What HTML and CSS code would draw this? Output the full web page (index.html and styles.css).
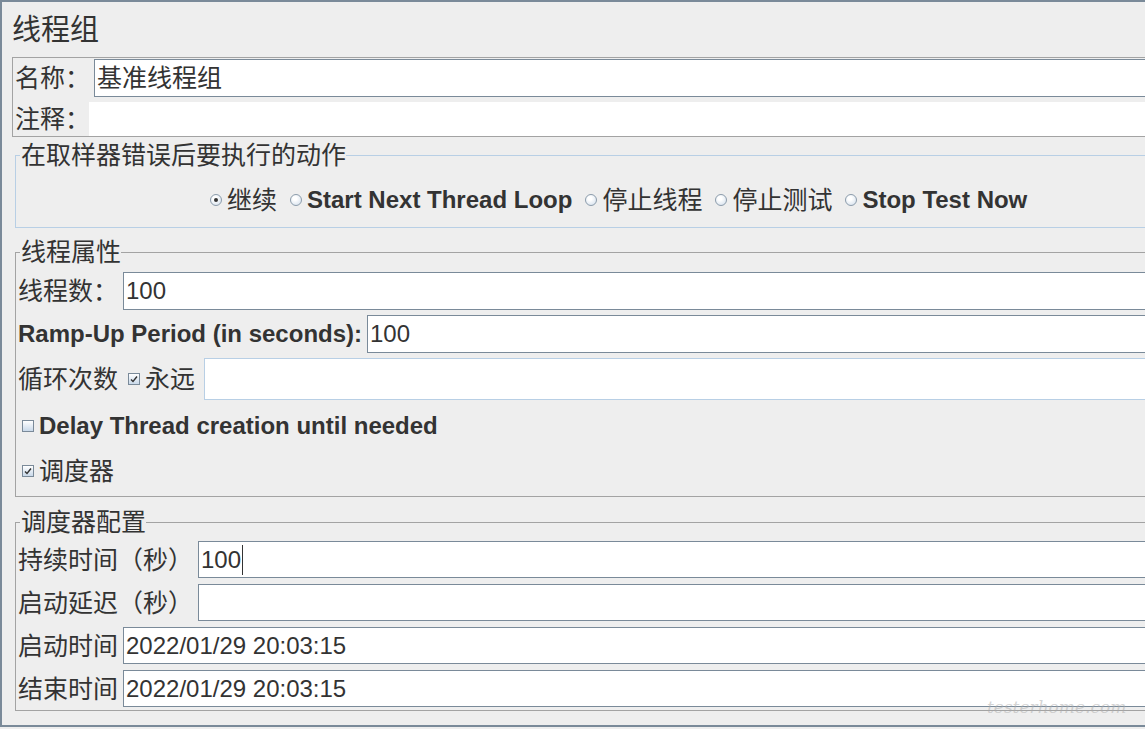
FILE: index.html
```html
<!DOCTYPE html>
<html lang="zh-CN">
<head>
    <meta charset="UTF-8">
    <meta name="viewport" content="width=device-width, initial-scale=1.0">
    <title>线程组</title>
    <link rel="stylesheet" href="styles.css">
</head>
<body>
    <div class="frame">
        <div class="title">线程组</div>

        <div class="name-panel">
            <div class="name-row">
                <span class="zh name-label">名称：</span>
                <div class="field zh-value">基准线程组</div>
            </div>
            <div class="name-row comment-row">
                <span class="zh comment-label">注释：</span>
                <div class="comment-field"></div>
            </div>
        </div>

        <fieldset class="group group-blue">
            <legend class="zh">在取样器错误后要执行的动作</legend>
            <div class="radio-row">
                <span class="radio checked"></span><span class="zh opt">继续</span>
                <span class="radio"></span><span class="en opt">Start Next Thread Loop</span>
                <span class="radio"></span><span class="zh opt">停止线程</span>
                <span class="radio"></span><span class="zh opt">停止测试</span>
                <span class="radio"></span><span class="en opt">Stop Test Now</span>
            </div>
        </fieldset>

        <fieldset class="group group-threads">
            <legend class="zh">线程属性</legend>
            <div class="row row-first">
                <span class="zh label w-short">线程数：</span>
                <div class="field">100</div>
            </div>
            <div class="row">
                <span class="en label w-ramp">Ramp-Up Period (in seconds):</span>
                <div class="field">100</div>
            </div>
            <div class="row row-loop">
                <span class="zh label">循环次数</span>
                <span class="check checked loop-check">
                    <svg width="10" height="10" viewBox="0 0 10 10"><path d="M2 5.5 L4 7.5 L8 2.5" fill="none" stroke="#333" stroke-width="1.4"/></svg>
                </span>
                <span class="zh">永远</span>
                <div class="field field-light"></div>
            </div>
            <div class="row row-check row-delay">
                <span class="check"></span>
                <span class="en">Delay Thread creation until needed</span>
            </div>
            <div class="row row-check row-sched">
                <span class="check checked">
                    <svg width="10" height="10" viewBox="0 0 10 10"><path d="M2 5.5 L4 7.5 L8 2.5" fill="none" stroke="#333" stroke-width="1.4"/></svg>
                </span>
                <span class="zh">调度器</span>
            </div>
        </fieldset>

        <fieldset class="group group-sched">
            <legend class="zh">调度器配置</legend>
            <div class="row row-first">
                <span class="zh label w-long">持续时间（秒）</span>
                <div class="field">100<span class="caret"></span></div>
            </div>
            <div class="row">
                <span class="zh label w-long">启动延迟（秒）</span>
                <div class="field"></div>
            </div>
            <div class="row">
                <span class="zh label w-short">启动时间</span>
                <div class="field">2022/01/29 20:03:15</div>
            </div>
            <div class="row">
                <span class="zh label w-short">结束时间</span>
                <div class="field">2022/01/29 20:03:15</div>
            </div>
        </fieldset>

        <div class="watermark">testerhome.com</div>
    </div>
</body>
</html>
```

FILE: styles.css
```css
html, body {
    margin: 0;
    padding: 0;
    overflow: hidden;
    background-color: #eeeeee;
}

body {
    font-family: "Liberation Sans", "Noto Sans CJK SC", sans-serif;
    font-size: 24px;
    line-height: 30px;
    color: #333333;
    white-space: nowrap;
}

.frame {
    position: relative;
    width: 1260px;
    height: 723px;
    border-top: 2px solid #7a8a99;
    border-left: 2px solid #7a8a99;
    border-bottom: 2px solid #7a8a99;
}

.zh {
    font-size: 25px;
}

.en {
    font-weight: bold;
}

.title {
    font-size: 29px;
    line-height: 40px;
    margin: 8px 0 0 10px;
}

/* name / comment */
.name-panel {
    margin: 7px 0 0 10px;
    padding-top: 1px;
    border: 1px solid #a3a3a3;
}

.name-row {
    display: flex;
    align-items: center;
}

.name-label {
    width: 81px;
    padding-left: 2px;
    box-sizing: border-box;
    flex: none;
}

.comment-row {
    margin-top: 5px;
}

.comment-label {
    width: 76px;
    padding-left: 2px;
    box-sizing: border-box;
    flex: none;
    overflow: hidden;
}

.comment-field {
    flex: 1;
    height: 34px;
    background-color: #ffffff;
}

.field {
    flex: 1;
    height: 38px;
    box-sizing: border-box;
    border: 1px solid #7a8a99;
    background-color: #ffffff;
    display: flex;
    align-items: center;
    padding-left: 2px;
}

.zh-value {
    font-size: 25px;
}

.field-light {
    height: 42px;
    border-color: #b8cfe5;
    margin-left: 9px;
}

.caret {
    display: inline-block;
    width: 1px;
    height: 30px;
    margin-left: 1px;
    background-color: #333333;
}

/* groups */
.group {
    margin: 10px 0 0 13px;
    padding: 0;
    border: 1px solid #a3a3a3;
    min-width: 0;
}

.group legend {
    margin-left: 4px;
    padding: 0 0 0 1px;
    line-height: 28px;
}

.group-blue {
    margin-top: 4px;
    border-color: #b8cfe5;
}

.group-sched {
    margin-top: 11px;
    padding-bottom: 3px;
}

.radio-row {
    display: flex;
    align-items: center;
    height: 30px;
    margin: 16px 0 12px 0;
    padding-left: 194px;
}

.radio {
    flex: none;
    width: 12px;
    height: 12px;
    box-sizing: border-box;
    border: 1px solid #8c9cab;
    border-radius: 50%;
    background: radial-gradient(circle at 40% 35%, #ffffff 20%, #cfdcea 100%);
    margin-right: 5px;
    position: relative;
}

.radio.checked::after {
    content: "";
    position: absolute;
    left: 3px;
    top: 3px;
    width: 4px;
    height: 4px;
    border-radius: 50%;
    background-color: #333333;
}

.opt {
    margin-right: 13px;
}

.opt:last-child {
    margin-right: 0;
}

.row {
    display: flex;
    align-items: center;
    margin-top: 5px;
}

.row-first {
    margin-top: 6px;
}

.group-sched .row {
    margin-top: 6px;
}

.group-sched .row-first {
    margin-top: 5px;
}

.group-sched .field {
    height: 37px;
}

.label {
    flex: none;
    padding-left: 2px;
    box-sizing: border-box;
}

.w-short {
    width: 107px;
}

.w-ramp {
    width: 351px;
}

.w-long {
    width: 182px;
}

.check {
    flex: none;
    width: 12px;
    height: 12px;
    box-sizing: border-box;
    border: 1px solid #7a8a99;
    background: linear-gradient(#ffffff, #c9d9ea);
    display: flex;
    align-items: center;
    justify-content: center;
}

.loop-check {
    margin: 0 5px 0 10px;
}

.row-check {
    height: 40px;
    padding-left: 6px;
}

.row-check .check {
    margin-right: 5px;
}

.row-delay {
    margin-top: 6px;
}

.row-sched {
    margin-top: 5px;
    margin-bottom: 5px;
}

.watermark {
    position: absolute;
    left: 985px;
    top: 690px;
    font-family: "DejaVu Serif", serif;
    font-style: italic;
    font-size: 17px;
    color: rgba(170, 170, 170, 0.5);
}
```
